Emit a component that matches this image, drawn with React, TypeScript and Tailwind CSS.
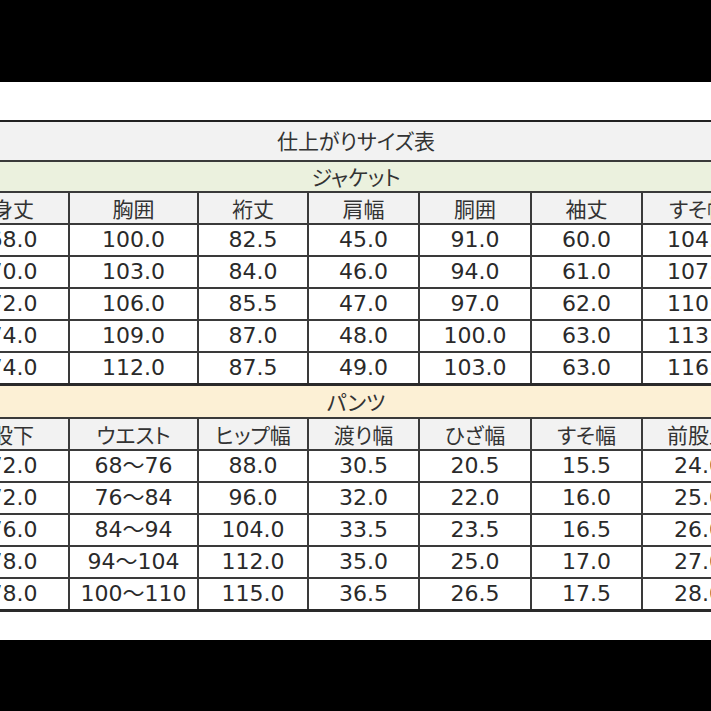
import React from "react";

const widths = ["w-[112px] border-r-2", "w-[129px] border-r-2", "w-[110px] border-r-2", "w-[111px] border-r-2", "w-[112px] border-r-2", "w-[111px] border-r-2", "w-[111px]"];

const jacketHead = ["身丈", "胸囲", "裄丈", "肩幅", "胴囲", "袖丈", "すそ幅"];
const jacketRows = [
  ["68.0", "100.0", "82.5", "45.0", "91.0", "60.0", "104.0"],
  ["70.0", "103.0", "84.0", "46.0", "94.0", "61.0", "107.0"],
  ["72.0", "106.0", "85.5", "47.0", "97.0", "62.0", "110.0"],
  ["74.0", "109.0", "87.0", "48.0", "100.0", "63.0", "113.0"],
  ["74.0", "112.0", "87.5", "49.0", "103.0", "63.0", "116.0"],
];
const pantsHead = ["股下", "ウエスト", "ヒップ幅", "渡り幅", "ひざ幅", "すそ幅", "前股上"];
const pantsRows = [
  ["72.0", "68～76", "88.0", "30.5", "20.5", "15.5", "24.0"],
  ["72.0", "76～84", "96.0", "32.0", "22.0", "16.0", "25.0"],
  ["76.0", "84～94", "104.0", "33.5", "23.5", "16.5", "26.0"],
  ["78.0", "94～104", "112.0", "35.0", "25.0", "17.0", "27.0"],
  ["78.0", "100～110", "115.0", "36.5", "26.5", "17.5", "28.0"],
];

function HeadRow({ cells }: { cells: string[] }) {
  return (
    <div className="flex h-[32px] border-b-2 border-[#3a3a3a] bg-[#f2f2f2]">
      {cells.map((c, i) => (
        <div
          key={i}
          className={`${widths[i]} shrink-0 border-[#3a3a3a] flex items-center justify-center text-[21px] text-[#333] leading-none [font-family:'Noto_Sans_CJK_JP',sans-serif] [font-feature-settings:'palt']`}
        >
          {c}
        </div>
      ))}
    </div>
  );
}

function DataRow({ cells, last }: { cells: string[]; last?: boolean }) {
  return (
    <div className={`flex bg-white ${last ? "h-[33px] border-b-[3px] border-[#2a2a2a]" : "h-[32px] border-b-2 border-[#3a3a3a]"}`}>
      {cells.map((c, i) => (
        <div
          key={i}
          className={`${widths[i]} shrink-0 border-[#3a3a3a] flex items-center justify-center text-[22px] text-[#2a2a2a] leading-none [font-family:'DejaVu_Sans','Noto_Sans_CJK_JP',sans-serif]`}
        >
          {c}
        </div>
      ))}
    </div>
  );
}

export default function App() {
  return (
    <div className="w-[711px] h-[711px] bg-black flex flex-col">
      <div className="h-[82px] shrink-0 bg-black" />
      <div className="h-[558px] shrink-0 bg-white overflow-hidden pt-[38px]">
        <div className="ml-[-42px] w-[796px] border-t-2 border-[#222]">
          <div className="h-[40px] border-b-2 border-[#3a3a3a] bg-[#f2f2f2] flex items-center justify-center text-[21px] text-[#333] [font-family:'Noto_Sans_CJK_JP',sans-serif] [font-feature-settings:'palt']">
            仕上がりサイズ表
          </div>
          <div className="h-[31px] border-b-2 border-[#3a3a3a] bg-[#ebf1de] flex items-center justify-center text-[21px] text-[#333] [font-family:'Noto_Sans_CJK_JP',sans-serif] [font-feature-settings:'palt']">
            ジャケット
          </div>
          <HeadRow cells={jacketHead} />
          {jacketRows.map((r, i) => (
            <DataRow key={i} cells={r} last={i === jacketRows.length - 1} />
          ))}
          <div className="h-[33px] border-b-2 border-[#3a3a3a] bg-[#fcf0d5] flex items-center justify-center text-[21px] text-[#333] [font-family:'Noto_Sans_CJK_JP',sans-serif] [font-feature-settings:'palt']">
            パンツ
          </div>
          <HeadRow cells={pantsHead} />
          {pantsRows.map((r, i) => (
            <DataRow key={i} cells={r} last={i === pantsRows.length - 1} />
          ))}
        </div>
      </div>
      <div className="flex-1 bg-black" />
    </div>
  );
}
